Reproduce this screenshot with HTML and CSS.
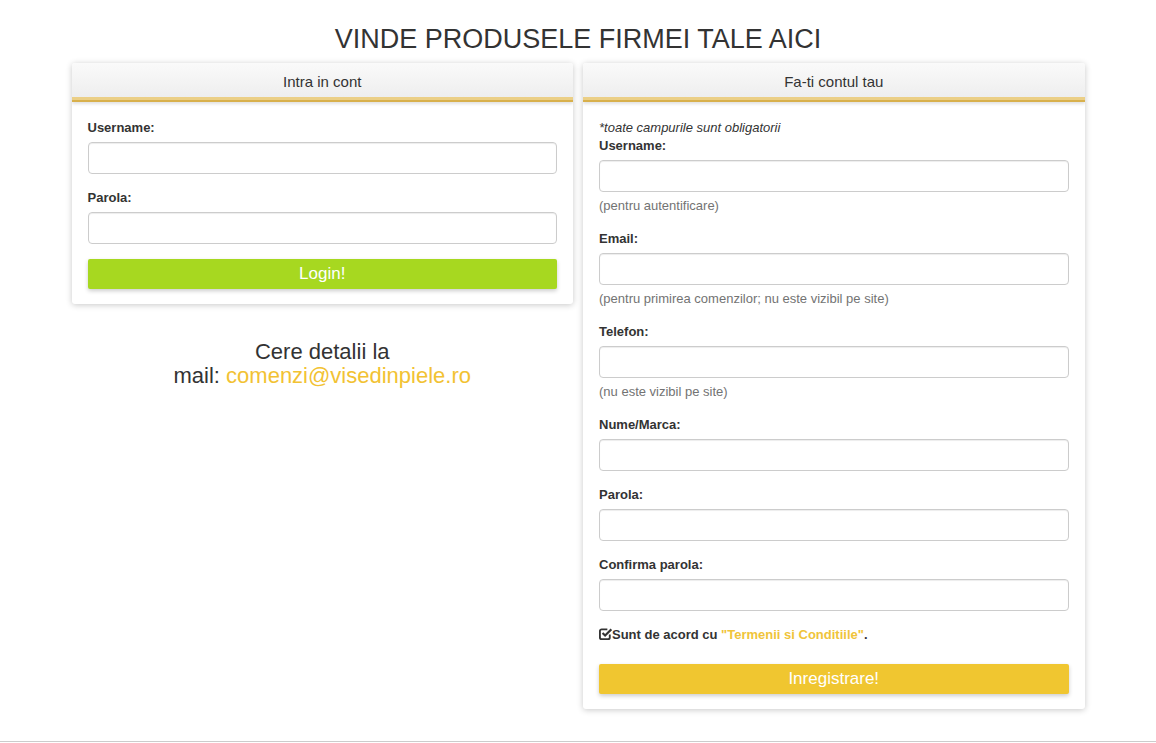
FILE: index.html
```html
<!DOCTYPE html>
<html lang="ro">
<head>
    <meta charset="UTF-8">
    <meta name="viewport" content="width=device-width, initial-scale=1.0">
    <title>Vinde produsele firmei tale</title>
    <link rel="stylesheet" href="styles.css">
</head>
<body>
    <h1 class="title">VINDE PRODUSELE FIRMEI TALE AICI</h1>
    <div class="container">
        <div class="column">
            <div class="panel">
                <div class="panel-heading">Intra in cont</div>
                <form class="panel-body">
                    <div class="form-group">
                        <label>Username:</label>
                        <input type="text" class="form-control">
                    </div>
                    <div class="form-group">
                        <label>Parola:</label>
                        <input type="password" class="form-control">
                    </div>
                    <button type="button" class="btn btn-green">Login!</button>
                </form>
            </div>
            <p class="contact">Cere detalii la<br>mail: <a href="#">comenzi@visedinpiele.ro</a></p>
        </div>

        <div class="column">
            <div class="panel">
                <div class="panel-heading">Fa-ti contul tau</div>
                <form class="panel-body">
                    <p class="note">*toate campurile sunt obligatorii</p>
                    <div class="form-group">
                        <label>Username:</label>
                        <input type="text" class="form-control">
                        <span class="help-block">(pentru autentificare)</span>
                    </div>
                    <div class="form-group">
                        <label>Email:</label>
                        <input type="text" class="form-control">
                        <span class="help-block">(pentru primirea comenzilor; nu este vizibil pe site)</span>
                    </div>
                    <div class="form-group">
                        <label>Telefon:</label>
                        <input type="text" class="form-control">
                        <span class="help-block">(nu este vizibil pe site)</span>
                    </div>
                    <div class="form-group">
                        <label>Nume/Marca:</label>
                        <input type="text" class="form-control">
                    </div>
                    <div class="form-group">
                        <label>Parola:</label>
                        <input type="password" class="form-control">
                    </div>
                    <div class="form-group">
                        <label>Confirma parola:</label>
                        <input type="password" class="form-control">
                    </div>
                    <p class="agree">
                        <svg class="check-icon" width="13" height="13" viewBox="0 0 14 14">
                            <path d="M11.6 8v3.2a1.8 1.8 0 0 1-1.8 1.8H2.8A1.8 1.8 0 0 1 1 11.2V4.3a1.8 1.8 0 0 1 1.8-1.8H9" fill="none" stroke="#333" stroke-width="2"/>
                            <path d="M3.8 6.4l2.8 2.8L13.3 2.5" fill="none" stroke="#333" stroke-width="2.3"/>
                        </svg>Sunt de acord cu <a href="#">"Termenii si Conditiile"</a>.
                    </p>
                    <button type="button" class="btn btn-yellow">Inregistrare!</button>
                </form>
            </div>
        </div>
    </div>
    <div class="footer"></div>
</body>
</html>
```

FILE: styles.css
```css
body {
    font-family: "Liberation Sans", Arial, sans-serif;
    font-size: 13px;
    line-height: 18px;
    color: #333;
    background-color: #fff;
    margin: 0;
    padding: 0;
}

.title {
    margin: 24px 0 9px;
    font-size: 27px;
    font-weight: normal;
    line-height: 30px;
    text-align: center;
}

.container {
    width: 1013px;
    margin: 0 auto;
    display: grid;
    grid-template-columns: 1fr 1fr;
    column-gap: 10px;
    align-items: start;
}

.panel {
    background-color: #fff;
    border-radius: 3px;
    box-shadow: 0 1px 6px rgba(0, 0, 0, 0.22);
    overflow: hidden;
}

.panel-heading {
    height: 37px;
    line-height: 37px;
    text-align: center;
    font-size: 15px;
    background: linear-gradient(#fafafa, #ededed);
    border-bottom: 2px solid #d8b04c;
    box-shadow: inset 0 -3px 0 #ebcf86, 0 2px 3px rgba(0, 0, 0, 0.12);
    position: relative;
}

.panel-body {
    display: block;
    padding: 17px 16px 15px;
    margin: 0;
}

.form-group {
    margin-bottom: 15px;
}

label {
    display: block;
    font-weight: bold;
    margin-bottom: 5px;
}

.form-control {
    display: block;
    box-sizing: border-box;
    width: 100%;
    height: 32px;
    margin: 0;
    padding: 6px 12px;
    border: 1px solid #ccc;
    border-radius: 4px;
    box-shadow: inset 0 1px 1px rgba(0, 0, 0, 0.075);
    font-family: inherit;
    font-size: 14px;
}

.help-block {
    display: block;
    margin-top: 5px;
    color: #737373;
}

.note {
    margin: 0;
    font-style: italic;
}

.agree {
    margin: 0 0 20px;
    font-weight: bold;
}

.agree a {
    color: #f0c43a;
    text-decoration: none;
}

.check-icon {
    vertical-align: -1px;
}

.btn {
    display: block;
    width: 100%;
    height: 30px;
    border: none;
    border-radius: 2px;
    color: #fff;
    font-family: inherit;
    font-size: 17px;
    box-shadow: 0 2px 4px rgba(0, 0, 0, 0.2);
    cursor: pointer;
}

.btn-green {
    background-color: #a7d820;
}

.btn-yellow {
    background-color: #f0c630;
}

.contact {
    margin: 36px 0 0;
    text-align: center;
    font-size: 22px;
    line-height: 24px;
}

.contact a {
    color: #f2c233;
    text-decoration: none;
}

.footer {
    margin-top: 32px;
    border-top: 1px solid #ccc;
}
```
